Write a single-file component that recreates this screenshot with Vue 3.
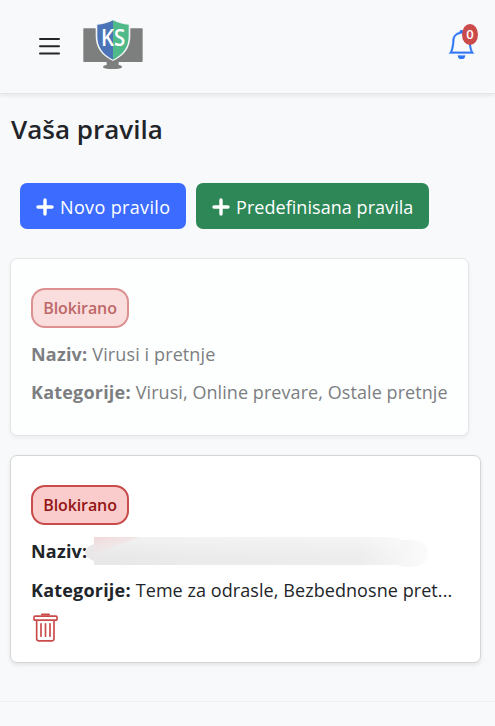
<script setup>
const rules = [
  { status: 'Blokirano', name: 'Virusi i pretnje', categories: 'Virusi, Online prevare, Ostale pretnje', locked: true },
  { status: 'Blokirano', name: '', categories: 'Teme za odrasle, Bezbednosne pret...', locked: false },
]
const actions = [
  { label: 'Novo pravilo', kind: 'primary' },
  { label: 'Predefinisana pravila', kind: 'success' },
]
</script>

<template>
  <div class="page">
    <header class="topbar">
      <svg class="menu" viewBox="0 0 21 18">
        <path d="M1 2h19M1 9.2h19M1 16.4h19" />
      </svg>
      <svg class="logo" viewBox="190 27 178 150">
        <path fill="#7d7f7e" d="M192 55h174q2 0 2 2v97q0 2-2 2h-70v9q10 1 10 6 0 6-28 6t-29-6q0-5 11-6v-9h-68q-2 0-2-2V57q0-2 2-2z" />
        <path fill="#f1f4f5" d="M279 27q25 14 52 14v38q0 50-52 74-52-24-52-74V41q27 0 52-14z" />
        <path fill="#4a74b7" d="M279 31q-22 12-47 13v35q0 47 47 70z" />
        <path fill="#50b98a" d="M279 31q22 12 47 13v35q0 47-47 70z" />
        <text class="logo-text" x="243" y="108" textLength="73" lengthAdjust="spacingAndGlyphs">KS</text>
      </svg>
      <div class="notifications">
        <svg class="bell" viewBox="0 0 16 16">
          <path d="M8 16a2 2 0 0 0 2-2H6a2 2 0 0 0 2 2M8 1.918l-.797.161A4 4 0 0 0 4 6c0 .628-.134 2.197-.459 3.742-.16.767-.376 1.566-.663 2.258h10.244c-.287-.692-.502-1.49-.663-2.258C12.134 8.197 12 6.628 12 6a4 4 0 0 0-3.203-3.92zM14.22 12c.223.447.481.801.78 1H1c.299-.199.557-.553.78-1C2.68 10.2 3 6.88 3 6c0-2.42 1.72-4.44 4.005-4.901a1 1 0 1 1 1.99 0A5 5 0 0 1 13 6c0 .88.32 4.2 1.22 6" />
        </svg>
        <span class="count">0</span>
      </div>
    </header>

    <main class="content">
      <h1>Vaša pravila</h1>
      <div class="actions">
        <button v-for="a in actions" :key="a.label" class="btn" :class="a.kind">
          <svg class="plus" viewBox="0 0 18 18"><path d="M9 2v14M2 9h14" /></svg>
          <span>{{ a.label }}</span>
        </button>
      </div>

      <article v-for="(r, i) in rules" :key="i" class="card" :class="{ locked: r.locked }">
        <span class="status">{{ r.status }}</span>
        <p class="name">
          <b>Naziv:</b>
          <span v-if="r.name" class="name-value">{{ r.name }}</span>
          <svg v-else class="redacted" viewBox="0 0 344 30">
            <defs>
              <linearGradient id="smudge" x1="0" x2="1" y1="0" y2="0">
                <stop offset="0" stop-color="#e9e7e8" />
                <stop offset=".3" stop-color="#ebebeb" />
                <stop offset=".8" stop-color="#ededed" />
                <stop offset="1" stop-color="#fbfbfb" />
              </linearGradient>
              <linearGradient id="fade" x1="0" x2="0" y1="0" y2="1">
                <stop offset="0" stop-color="#fff" stop-opacity=".4" />
                <stop offset=".7" stop-color="#fff" stop-opacity="0" />
              </linearGradient>
              <linearGradient id="blush" x1="0" x2=".5" y1="0" y2="1">
                <stop offset="0" stop-color="#f1d9da" />
                <stop offset=".8" stop-color="#f1d9da" stop-opacity="0" />
              </linearGradient>
            </defs>
            <path fill="url(#smudge)" d="M9 0h290q14 0 17 3h8q19 0 19 13 0 14-18 14-8 0-12-2H9v-4Q0 21 0 14 2 9 9 7z" />
            <path fill="url(#fade)" d="M9 0h290q14 0 17 3v25H9z" />
            <path fill="url(#blush)" d="M9 0h46L9 18z" />
          </svg>
        </p>
        <p class="categories">
          <b>Kategorije:</b>
          <span>{{ r.categories }}</span>
        </p>
        <button v-if="!r.locked" class="delete" aria-label="Obriši">
          <svg viewBox="99 488 75 86">
            <path class="handle" d="M126 492h21" />
            <rect x="102" y="497" width="69" height="12" rx="3" />
            <path d="M110 510v54q0 7 7 7h38q7 0 7-7v-54M123 520v37M136.500 520v37M150 520v37" />
          </svg>
        </button>
      </article>
    </main>
    <footer class="footer"></footer>
  </div>
</template>

<style>
body { background: #f8f9fb; overflow: hidden; }
</style>

<style scoped>
.page {
  box-sizing: border-box;
  height: 726px;
  display: flex;
  flex-direction: column;
  background: #f8f9fb;
  color: #212529;
  font-family: "Open Sans", "Noto Sans", sans-serif;
  font-size: 18px;
}
.topbar {
  flex: none;
  box-sizing: border-box;
  height: 94px;
  display: flex;
  align-items: flex-start;
  padding: 19px 15px 0 39px;
  border-bottom: 1px solid #e3e5e7;
  box-shadow: 0 2px 4px rgba(0, 0, 0, .07);
}
.menu { width: 21px; height: 18px; margin-top: 18px; fill: none; stroke: #24272a; stroke-width: 2; stroke-linecap: round; }
.logo { width: 60px; height: 50px; margin-left: 23px; }
.logo-text { fill: #fff; font: 600 70px "Open Sans", sans-serif; }
.notifications { position: relative; margin: 11px 4px 0 auto; height: 29px; }
.bell { display: block; width: 29px; height: 29px; fill: #2f76f6; stroke: #2f76f6; stroke-width: .15; }
.count {
  position: absolute;
  left: 15px;
  top: -6px;
  width: 16px;
  height: 21px;
  border-radius: 50%;
  background: #cb4b4b;
  color: #fff;
  font: 600 13px/21px "Open Sans", sans-serif;
  text-align: center;
}
.content { padding: 0 14px 0 10px; }
h1 { margin: 17px 0 0 1px; height: 36px; font-size: 26px; line-height: 36px; font-weight: 600; letter-spacing: 0; }
.actions { display: flex; gap: 10px; margin: 36px 0 0 10px; }
.btn {
  box-sizing: border-box;
  width: 166px;
  height: 46px;
  display: flex;
  align-items: center;
  gap: 6px;
  padding: 2px 0 0 16px;
  border: 0;
  border-radius: 7px;
  color: #fff;
  font: 18px/24px "Open Sans", sans-serif;
  white-space: nowrap;
}
.primary { background: #3b6cff; letter-spacing: .35px; }
.success { width: 233px; background: #2e8757; letter-spacing: .05px; }
.plus { width: 18px; height: 18px; fill: none; stroke: #fff; stroke-width: 3.4; stroke-linecap: round; }
.card {
  box-sizing: border-box;
  width: 471px;
  height: 208px;
  margin-top: 19px;
  padding: 29px 20px 0;
  border: 1px solid #d4d6d7;
  border-radius: 7px;
  background: #fff;
  box-shadow: 0 2px 4px rgba(0, 0, 0, .09);
  white-space: nowrap;
}
.card.locked { width: 459px; height: 178px; margin-top: 29px; border-color: #e3e4e5; background: #fdfefe; box-shadow: 0 2px 4px rgba(0, 0, 0, .055); }
.status {
  box-sizing: border-box;
  display: block;
  width: 98px;
  height: 40px;
  border: 2px solid #c94b4c;
  border-radius: 14px;
  background: #fbcccc;
  color: #931414;
  font-size: 16px;
  line-height: 37px;
  font-weight: 600;
  letter-spacing: -.1px;
  text-align: center;
}
.locked .status { border-color: #dc9090; background: #fadddd; color: #bd6868; }
p { display: flex; align-items: center; gap: 5px; height: 26px; margin: 13px 0 0; line-height: 26px; letter-spacing: .11px; }
.locked p { color: #7c7e81; }
.categories span { letter-spacing: .07px; }
.locked p.categories { margin-top: 12px; }
b { font-weight: 700; letter-spacing: .2px; }
.redacted { width: 344px; height: 30px; margin: 1px 0 0 -7px; }
.delete { display: block; margin: 10px 0 0 2px; padding: 0; border: 0; background: none; }
.delete svg { display: block; width: 25px; height: 29px; fill: none; stroke: #cb4b4b; stroke-width: 5; stroke-linecap: round; }
.delete .handle { stroke-width: 6; }
.footer { flex: none; height: 24px; margin-top: auto; border-top: 1px solid #eef0f1; }
</style>
